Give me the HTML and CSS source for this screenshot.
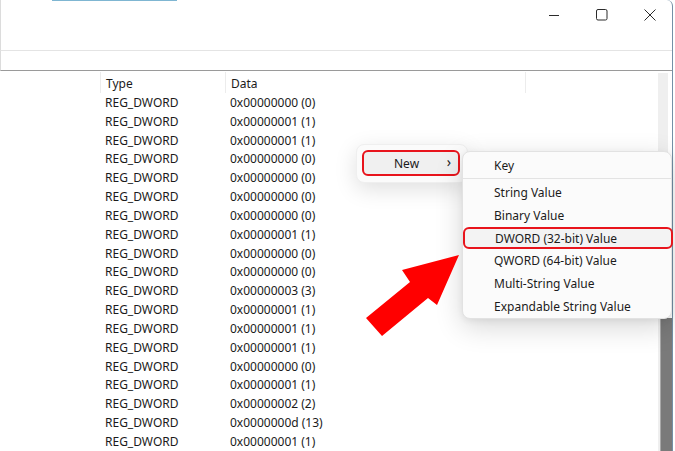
FILE: index.html
```html
<!DOCTYPE html>
<html>
<head>
<meta charset="utf-8">
<link rel="stylesheet" href="styles.css">
</head>
<body>
<div class="window">
  <div class="accent"></div>
  <div class="titlebar">
    <div class="controls">
      <span class="ctl"><svg width="12" height="12" viewBox="0 0 12 12"><path d="M1 6.5h10" stroke="#2b2b2b" stroke-width="1" fill="none"/></svg></span>
      <span class="ctl"><svg width="12" height="12" viewBox="0 0 12 12"><rect x="0.5" y="0.5" width="10.5" height="10.5" rx="1.5" stroke="#2b2b2b" stroke-width="1" fill="none"/></svg></span>
      <span class="ctl"><svg width="12" height="12" viewBox="0 0 12 12"><path d="M0.5 0.5l11 11M11.5 0.5l-11 11" stroke="#2b2b2b" stroke-width="1" fill="none"/></svg></span>
    </div>
  </div>
  <div class="addressbar"></div>
  <div class="body">
    <div class="list">
      <div class="head">
        <div class="cell"></div>
        <div class="cell sep">Type</div>
        <div class="cell sep">Data</div>
        <div class="cell sep"></div>
      </div>
      <div class="row"><div></div><div class="t">REG_DWORD</div><div class="t">0x00000000 (0)</div></div>
      <div class="row"><div></div><div class="t">REG_DWORD</div><div class="t">0x00000001 (1)</div></div>
      <div class="row"><div></div><div class="t">REG_DWORD</div><div class="t">0x00000001 (1)</div></div>
      <div class="row"><div></div><div class="t">REG_DWORD</div><div class="t">0x00000000 (0)</div></div>
      <div class="row"><div></div><div class="t">REG_DWORD</div><div class="t">0x00000000 (0)</div></div>
      <div class="row"><div></div><div class="t">REG_DWORD</div><div class="t">0x00000000 (0)</div></div>
      <div class="row"><div></div><div class="t">REG_DWORD</div><div class="t">0x00000000 (0)</div></div>
      <div class="row"><div></div><div class="t">REG_DWORD</div><div class="t">0x00000001 (1)</div></div>
      <div class="row"><div></div><div class="t">REG_DWORD</div><div class="t">0x00000000 (0)</div></div>
      <div class="row"><div></div><div class="t">REG_DWORD</div><div class="t">0x00000000 (0)</div></div>
      <div class="row"><div></div><div class="t">REG_DWORD</div><div class="t">0x00000003 (3)</div></div>
      <div class="row"><div></div><div class="t">REG_DWORD</div><div class="t">0x00000001 (1)</div></div>
      <div class="row"><div></div><div class="t">REG_DWORD</div><div class="t">0x00000001 (1)</div></div>
      <div class="row"><div></div><div class="t">REG_DWORD</div><div class="t">0x00000001 (1)</div></div>
      <div class="row"><div></div><div class="t">REG_DWORD</div><div class="t">0x00000000 (0)</div></div>
      <div class="row"><div></div><div class="t">REG_DWORD</div><div class="t">0x00000001 (1)</div></div>
      <div class="row"><div></div><div class="t">REG_DWORD</div><div class="t">0x00000002 (2)</div></div>
      <div class="row"><div></div><div class="t">REG_DWORD</div><div class="t">0x0000000d (13)</div></div>
      <div class="row"><div></div><div class="t">REG_DWORD</div><div class="t">0x00000001 (1)</div></div>
    </div>
    <div class="scroll">
      <div class="track"></div>
      <div class="thumb"></div>
    </div>
  </div>
</div>

<div class="menu parent">
  <div class="mitem new"><span>New</span><span class="chev">›</span></div>
</div>

<div class="menu sub">
  <div class="sitem">Key</div>
  <div class="msep"></div>
  <div class="sitem">String Value</div>
  <div class="sitem">Binary Value</div>
  <div class="sitem hl">DWORD (32-bit) Value</div>
  <div class="sitem">QWORD (64-bit) Value</div>
  <div class="sitem">Multi-String Value</div>
  <div class="sitem">Expandable String Value</div>
</div>

<svg class="arrow" width="675" height="451" viewBox="0 0 675 451">
  <polygon points="459,255 402,270 410,282 366,318 382,336 428,298 437,305" fill="#ff0000"/>
</svg>
</body>
</html>
```

FILE: styles.css
```css
html, body {
  margin: 0;
  padding: 0;
  background: #ffffff;
}
body {
  width: 675px;
  height: 451px;
  overflow: hidden;
  position: relative;
  font-family: "Noto Sans", "Open Sans", sans-serif;
  font-size: 12px;
  color: #1b1b1b;
}
.window {
  width: 672px;
  height: 460px;
  border-right: 1px solid #7490a6;
  border-top-right-radius: 6px;
  background: #ffffff;
  display: flex;
  flex-direction: column;
  position: relative;
}
.accent {
  position: absolute;
  left: 52px;
  top: 0;
  width: 125px;
  height: 1px;
  background: #7fb6d2;
}
.titlebar {
  border-left: 1px solid #dcdcdc;
  border-bottom: 1px solid #e4e4e4;
  box-sizing: border-box;
  height: 51px;
}
.controls {
  display: flex;
  justify-content: flex-end;
  align-items: center;
  height: 30px;
  gap: 36px;
  padding-right: 16px;
}
.ctl {
  width: 12px;
  height: 12px;
  display: flex;
}
.addressbar {
  height: 20px;
  box-sizing: border-box;
  border-left: 1px solid #dcdcdc;
  border-bottom: 1px solid #9a9a9a;
}
.body {
  flex: 1;
  display: flex;
}
.list {
  flex: 1;
}
.head, .row {
  display: grid;
  grid-template-columns: 100px 125px 300px 1fr;
}
.head {
  height: 22px;
  align-items: stretch;
}
.head .cell {
  display: flex;
  align-items: center;
  padding-left: 5px;
  padding-top: 2px;
  margin-top: 1px;
}
.head .sep {
  border-left: 1px solid #ececec;
}
.row {
  height: 18.83px;
  align-items: center;
}
.row .t {
  padding-left: 5px;
  white-space: nowrap;
}
.scroll {
  width: 15px;
  position: relative;
}
.track {
  position: absolute;
  left: 1px;
  top: 2px;
  width: 10px;
  bottom: 0;
  background: #efefef;
}
.thumb {
  position: absolute;
  left: 3px;
  top: 247px;
  width: 11px;
  bottom: 0;
  background: #7a7a7a;
  border-left: 1px solid #a8a8a8;
}
.menu {
  position: absolute;
  background: #fbfbfb;
  border-radius: 8px;
  box-sizing: border-box;
}
.parent {
  left: 356px;
  top: 144px;
  width: 112px;
  height: 39px;
  padding: 5px 6px;
  border: 1px solid #efefef;
  box-shadow: 0 6px 22px rgba(0, 0, 0, 0.13);
}
.sub {
  left: 462px;
  top: 151px;
  width: 210px;
  height: 168px;
  padding-top: 2px;
  border: 1px solid #e2e2e2;
  box-shadow: 0 8px 28px rgba(0, 0, 0, 0.16), 0 2px 6px rgba(0, 0, 0, 0.06);
}
.mitem.new {
  height: 26px;
  box-sizing: border-box;
  border: 2px solid #e8141c;
  border-radius: 6px;
  background: #f0f0f0;
  display: flex;
  align-items: center;
  justify-content: space-between;
  padding-left: 30px;
  padding-right: 7px;
  margin-left: -1px;
  width: 98px;
}
.chev {
  font-size: 14px;
  line-height: 1;
  margin-top: -2px;
}
.sitem {
  height: 23px;
  display: flex;
  align-items: center;
  padding-left: 31px;
  box-sizing: border-box;
  white-space: nowrap;
}
.msep {
  height: 1px;
  background: #e3e3e3;
  margin: 1px 0 2px;
}
.sitem.hl {
  height: 22px;
  margin: 0 -2px 0 0;
  border: 2px solid #e8141c;
  border-radius: 6px;
  background: #f3f3f3;
  padding-left: 30px;
}
.arrow {
  position: absolute;
  left: 0;
  top: 0;
  pointer-events: none;
}
```
